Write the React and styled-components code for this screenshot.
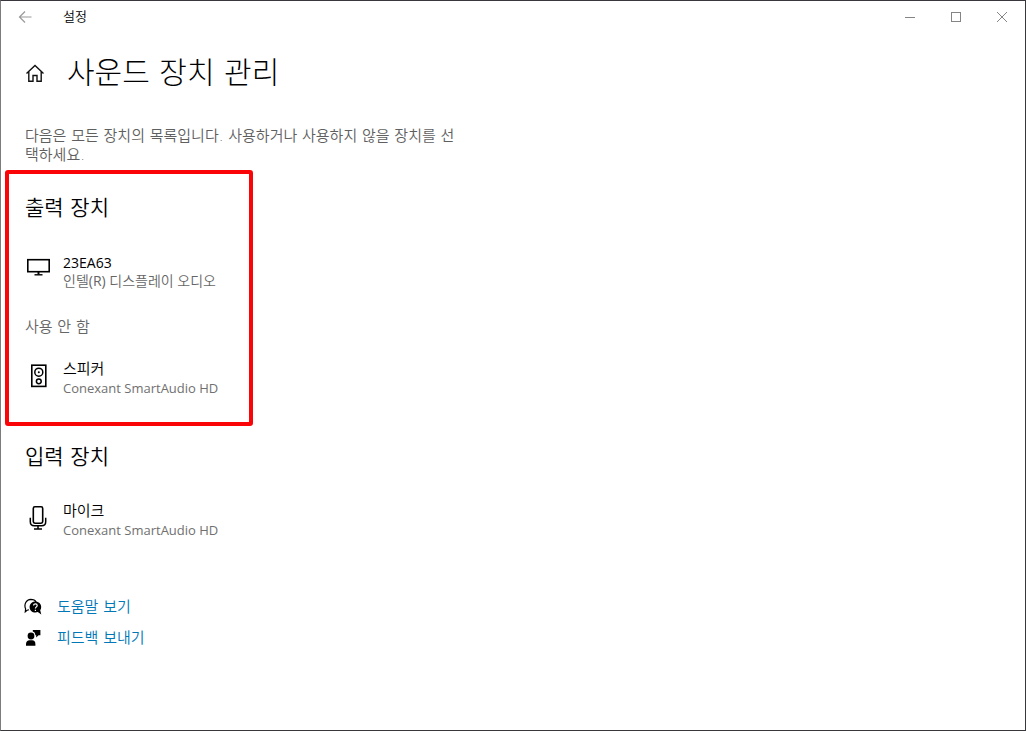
import React from "react";
import styled, { createGlobalStyle } from "styled-components";

const HANGUL_LIGHT = `"DejaVu Sans", "Noto Sans CJK KR", sans-serif`;
const HANGUL_FIRST = `"DejaVu Sans", "Noto Sans CJK KR DemiLight", "Noto Sans CJK KR", sans-serif`;
const LATIN_FIRST = `"Open Sans", "Noto Sans CJK KR DemiLight", "Noto Sans CJK KR", sans-serif`;

const GlobalStyle = createGlobalStyle`
  *, *::before, *::after { box-sizing: border-box; }
  body {
    margin: 0;
    background: #fff;
    color: #000;
    font-family: ${HANGUL_FIRST};
    font-weight: 350;
  }
  h1, h2, h3, p, ul { margin: 0; padding: 0; font-weight: 350; }
  ul { list-style: none; }
`;

const Window = styled.div`
  display: flex;
  flex-direction: column;
  min-height: 100vh;
  border: 1px solid #39373b;
  border-left-color: #7c7c7c;
  background: #fff;
`;

const TitleBar = styled.header`
  display: flex;
  align-items: center;
  height: 32px;
`;

const BarButton = styled.button`
  display: flex;
  align-items: center;
  justify-content: center;
  width: ${(p) => (p.$wide ? 48 : 46)}px;
  height: 32px;
  padding: 0;
  border: 0;
  background: none;
  color: ${(p) => (p.$wide ? "#999" : "#858585")};
`;

const AppName = styled.span`
  flex: 1;
  margin-left: 14px;
  font-size: 13px;
  font-weight: 400;
  line-height: 22px;
`;

const PageHeader = styled.div`
  display: flex;
  align-items: center;
  gap: 22px;
  height: 48px;
  margin-top: 16px;
  padding-left: 24px;
`;

const HomeButton = styled.button`
  display: flex;
  padding: 0;
  border: 0;
  background: none;
  color: #111;
`;

const PageTitle = styled.h1`
  font-family: ${HANGUL_LIGHT};
  font-size: 30px;
  font-weight: 300;
  line-height: 48px;
`;

const Intro = styled.p`
  max-width: 461px;
  margin-top: 30px;
  padding-left: 24px;
  color: #5f5f5f;
  font-size: 15px;
  line-height: 19px;
`;

const Section = styled.section`
  width: 248px;
  margin-left: 4px;
  padding: 0 16px;
  border: 4px solid transparent;
  border-radius: 3px;
`;

const OutputBox = styled(Section)`
  margin-top: 5px;
  padding-top: 20px;
  padding-bottom: 25px;
  border-color: #fb0408;
`;

const InputBox = styled(Section)`
  padding-top: 13px;
`;

const SectionTitle = styled.h2`
  font-size: 21px;
  line-height: 28px;
`;

const GroupLabel = styled.h3`
  margin-top: 27px;
  color: #666;
  font-size: 15px;
  line-height: 20px;
`;

const Device = styled.li`
  display: flex;
  gap: 10px;
  margin-top: ${(p) => p.$space}px;
`;

const DeviceIcon = styled.span`
  display: flex;
  flex: none;
  margin-top: 4px;
`;

const DeviceText = styled.div`
  font-family: ${LATIN_FIRST};
  white-space: nowrap;
`;

const DeviceName = styled.div`
  font-family: ${(p) => (p.$hangul ? HANGUL_FIRST : LATIN_FIRST)};
  font-size: ${(p) => (p.$hangul ? 15 : 14)}px;
  font-weight: 400;
  line-height: 19px;
`;

const DeviceDetail = styled.div`
  color: ${(p) => (p.$hangul ? "#666" : "#707070")};
  font-size: ${(p) => (p.$hangul ? 14 : 13)}px;
  font-weight: 400;
  line-height: 18px;
`;

const Links = styled.nav`
  display: flex;
  flex-direction: column;
  align-items: flex-start;
  gap: 11px;
  margin: 54px 0 24px 23px;
`;

const HelpLink = styled.a`
  display: flex;
  align-items: center;
  gap: 15px;
  color: #0078b8;
  font-size: 15px;
  line-height: 20px;
  text-decoration: none;
  svg { color: #000; }
`;

const Icon = ({ w, h, children }) => (
  <svg width={w} height={h} viewBox={`0 0 ${w} ${h}`} fill="none" stroke="currentColor" aria-hidden="true">
    {children}
  </svg>
);

const BackIcon = () => (
  <Icon w={14} h={14}><path d="M13.5 7H1.5M7 1.5L1.5 7L7 12.5" strokeWidth="1.2" /></Icon>
);
const MinimizeIcon = () => <Icon w={12} h={12}><path d="M1 6.5H11" /></Icon>;
const MaximizeIcon = () => <Icon w={12} h={12}><rect x="1.5" y="1.5" width="9" height="9" /></Icon>;
const CloseIcon = () => <Icon w={12} h={12}><path d="M1 1L11 11M11 1L1 11" /></Icon>;

const HomeIcon = () => (
  <Icon w={20} h={20}>
    <path d="M1.5 10.5L10 2.5L18.5 10.5M3.8 8.6V18.3H8V12.5H12V18.3H16.2V8.6" strokeWidth="1.4" />
  </Icon>
);

const MonitorIcon = () => (
  <Icon w={28} h={24}>
    <rect x="2.8" y="2.7" width="21.4" height="12" strokeWidth="1.6" />
    <path d="M13.5 15V17.5" strokeWidth="2" />
    <path d="M9.5 17.8H17.5" strokeWidth="1.4" />
  </Icon>
);

const SpeakerIcon = () => (
  <Icon w={28} h={28}>
    <rect x="6.8" y="1.2" width="14" height="21.2" strokeWidth="1.6" />
    <circle cx="13.8" cy="8.2" r="4" strokeWidth="1.5" />
    <circle cx="13.8" cy="8.2" r="1" fill="currentColor" stroke="none" />
    <circle cx="13.8" cy="17.3" r="2.4" strokeWidth="1.5" />
  </Icon>
);

const MicIcon = () => (
  <Icon w={28} h={28}>
    <rect x="8.3" y="0.8" width="9.4" height="16.4" rx="1.6" strokeWidth="1.6" />
    <path d="M5.3 11.8V15.7Q5.3 19.7 9.3 19.7H16.7Q20.7 19.7 20.7 15.7V11.8" strokeWidth="1.5" />
    <path d="M13 19.7V23M9 22.9H17" strokeWidth="1.5" />
  </Icon>
);

const HelpIcon = () => (
  <Icon w={18} h={18}>
    <path d="M3 12.3L1.3 13.8L1.6 10.7C-.3 6.3 2.2 1.6 6.7 1.4C9.5 1.4 11.3 2.4 12 3.9M3 12.3L5 11.7" strokeWidth="1.2" />
    <path d="M11.3 3.4C7.9 3.4 5.6 5.9 5.6 9C5.6 12.3 8.1 14.6 11.3 14.6C12.3 14.6 13.1 14.4 13.8 14.1L17.3 16.4L16.2 12.2C18.8 8 16 3.4 11.3 3.4Z" fill="currentColor" stroke="none" />
    <path d="M9.6 7.5C9.6 5.3 13.2 5.5 13.2 7.5C13.2 8.9 11.4 8.9 11.4 10.6M11.4 11.7V12.9" stroke="#fff" strokeWidth="1.2" />
  </Icon>
);

const FeedbackIcon = () => (
  <Icon w={18} h={18}>
    <g fill="currentColor" stroke="none">
      <circle cx="7" cy="7" r="3.4" />
      <path d="M2 16.8V15C2 12.8 3.5 11.3 5.5 11.3H8.1C10.2 11.3 11.4 12.8 11.4 15V16.8Z" />
      <path d="M8.8 1H16.4V6.2H14.6L12.2 8.6V6.2H11.4C11.3 4.4 10.4 3 8.8 2.5Z" />
    </g>
  </Icon>
);

const DeviceRow = ({ icon, name, detail, space, hangulName, hangulDetail }) => (
  <Device $space={space}>
    <DeviceIcon>{icon}</DeviceIcon>
    <DeviceText>
      <DeviceName $hangul={hangulName}>{name}</DeviceName>
      <DeviceDetail $hangul={hangulDetail}>{detail}</DeviceDetail>
    </DeviceText>
  </Device>
);

export default function App() {
  return (
    <Window>
      <GlobalStyle />
      <TitleBar>
        <BarButton $wide aria-label="뒤로"><BackIcon /></BarButton>
        <AppName>설정</AppName>
        <BarButton aria-label="최소화"><MinimizeIcon /></BarButton>
        <BarButton aria-label="최대화"><MaximizeIcon /></BarButton>
        <BarButton aria-label="닫기"><CloseIcon /></BarButton>
      </TitleBar>
      <main>
        <PageHeader>
          <HomeButton aria-label="홈"><HomeIcon /></HomeButton>
          <PageTitle>사운드 장치 관리</PageTitle>
        </PageHeader>
        <Intro>다음은 모든 장치의 목록입니다. 사용하거나 사용하지 않을 장치를 선택하세요.</Intro>
        <OutputBox>
          <SectionTitle>출력 장치</SectionTitle>
          <ul>
            <DeviceRow space={31} icon={<MonitorIcon />} name="23EA63" detail="인텔(R) 디스플레이 오디오" hangulDetail />
          </ul>
          <GroupLabel>사용 안 함</GroupLabel>
          <ul>
            <DeviceRow space={23} icon={<SpeakerIcon />} name="스피커" detail="Conexant SmartAudio HD" hangulName />
          </ul>
        </OutputBox>
        <InputBox>
          <SectionTitle>입력 장치</SectionTitle>
          <ul>
            <DeviceRow space={31} icon={<MicIcon />} name="마이크" detail="Conexant SmartAudio HD" hangulName />
          </ul>
        </InputBox>
        <Links>
          <HelpLink href="#help"><HelpIcon />도움말 보기</HelpLink>
          <HelpLink href="#feedback"><FeedbackIcon />피드백 보내기</HelpLink>
        </Links>
      </main>
    </Window>
  );
}
